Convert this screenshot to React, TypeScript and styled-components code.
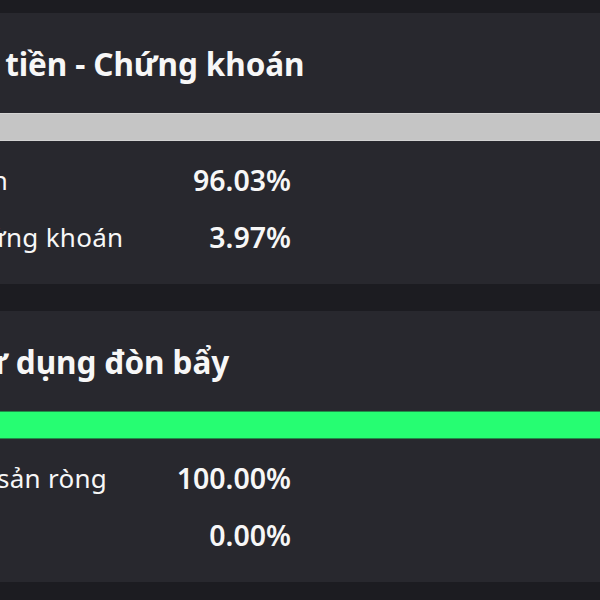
import React from 'react'
import styled, { createGlobalStyle } from 'styled-components'

const GlobalStyle = createGlobalStyle`
  *, *::before, *::after {
    box-sizing: border-box;
  }
  html, body {
    margin: 0;
    padding: 0;
    height: 100%;
    overflow: hidden;
    background: #1c1c21;
  }
  body {
    font-family: 'Noto Sans', 'Open Sans', sans-serif;
    color: #f7f7f7;
  }
`

// the screenshot is a crop of a wider screen, so the stack starts left of the viewport
const Stack = styled.div`
  display: flex;
  flex-direction: column;
  gap: 27px;
  padding-top: 13px;
  margin-left: -150px;
  width: 960px;
`

const Card = styled.section`
  background: #28282e;
  height: 271px;
  display: flex;
  flex-direction: column;
`

const Title = styled.h2`
  margin: 0;
  height: 100px;
  display: flex;
  align-items: center;
  padding-left: 17px;
  font-size: 31.5px;
  font-weight: 700;
  letter-spacing: -0.1px;
  white-space: nowrap;
`

const Bar = styled.div`
  display: flex;
  height: 28px;
`

const Segment = styled.div<{ $color: string; $edge: string }>`
  height: 100%;
  background: ${(p) => p.$color};
  box-shadow: inset 0 1px 0 ${(p) => p.$edge}, inset 0 -1px 0 ${(p) => p.$edge};
`

const Rows = styled.div`
  padding: 10px 0 19px 0;
`

const Row = styled.div`
  display: grid;
  grid-template-columns: 1fr auto;
  align-items: center;
  width: 441px;
  height: 57px;
  padding-left: 105px;
`

const Label = styled.span`
  font-size: 26px;
  font-weight: 400;
  letter-spacing: 0.3px;
  white-space: nowrap;
`

const Value = styled.span`
  font-size: 28.5px;
  font-weight: 600;
  text-align: right;
`

type Item = { label: string; value: number; color: string; edge: string }

const sections: { title: string; items: Item[] }[] = [
  {
    title: 'Tỷ trọng tiền - Chứng khoán',
    items: [
      { label: 'Tiền', value: 96.03, color: '#c5c5c5', edge: '#d3d3d3' },
      { label: 'Chứng khoán', value: 3.97, color: '#3d7bff', edge: '#3d7bff' },
    ],
  },
  {
    title: 'Chỉ số sử dụng đòn bẩy',
    items: [
      { label: 'Tài sản ròng', value: 100, color: '#26fd72', edge: '#1f8c48' },
      { label: 'Nợ', value: 0, color: '#ff4d4f', edge: '#ff4d4f' },
    ],
  },
]

export default function App() {
  return (
    <>
      <GlobalStyle />
      <Stack>
        {sections.map((s) => (
          <Card key={s.title}>
            <Title>{s.title}</Title>
            <Bar>
              {s.items.map((it) => (
                <Segment
                  key={it.label}
                  $color={it.color}
                  $edge={it.edge}
                  style={{ width: `${it.value}%` }}
                />
              ))}
            </Bar>
            <Rows>
              {s.items.map((it) => (
                <Row key={it.label}>
                  <Label>{it.label}</Label>
                  <Value>{it.value.toFixed(2)}%</Value>
                </Row>
              ))}
            </Rows>
          </Card>
        ))}
      </Stack>
    </>
  )
}
